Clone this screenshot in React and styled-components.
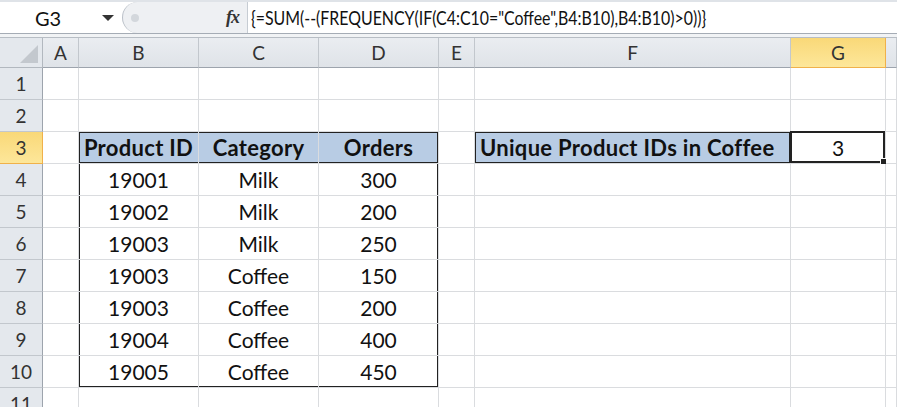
import React from "react";
import styled, { createGlobalStyle } from "styled-components";

const GlobalStyle = createGlobalStyle`
  html, body {
    margin: 0;
    padding: 0;
    background: #ffffff;
    overflow: hidden;
  }
  body {
    font-family: Lato, "Open Sans", "Liberation Sans", sans-serif;
  }
`;

const COLS = [43, 36, 120, 120, 120, 36, 316, 95, 11];
const LETTERS = ["A", "B", "C", "D", "E", "F", "G", ""];

const Page = styled.div`
  width: 897px;
  height: 407px;
  overflow: hidden;
  background: #fff;
`;

const FormulaBar = styled.div`
  display: flex;
  height: 31px;
  border-top: 2px solid #dfe3e8;
  border-bottom: 1px solid #a5acb5;
  background: #fff;
`;

const NameBox = styled.div`
  width: 122px;
  display: flex;
  align-items: center;
  font-size: 20px;
  color: #111;
  span {
    width: 96px;
    text-align: center;
  }
`;

const Arrow = styled.i`
  width: 0;
  height: 0;
  border-left: 6px solid transparent;
  border-right: 6px solid transparent;
  border-top: 6px solid #333;
  margin-left: 6px;
`;

const Splitter = styled.div`
  width: 125px;
  display: flex;
  align-items: center;
  justify-content: space-between;
  background: #eef0f3;
  border-left: 1px solid #b9bfc7;
  border-radius: 16px 0 0 16px;
  padding: 0 8px;
  box-sizing: border-box;
`;

const Grip = styled.span`
  width: 8px;
  height: 8px;
  border-radius: 50%;
  background: #d3d7dc;
`;

const Fx = styled.span`
  font-family: "Liberation Serif", serif;
  font-style: italic;
  font-weight: bold;
  font-size: 18px;
  color: #333;
  letter-spacing: -1px;
`;

const FormulaInput = styled.div`
  flex: 1;
  display: flex;
  align-items: center;
  border-left: 1px solid #c6ccd3;
  padding-left: 3px;
  font-size: 19.5px;
  color: #111;
  white-space: nowrap;
  span {
    display: inline-block;
    transform: scaleX(0.815);
    transform-origin: left center;
  }
`;

const Gap = styled.div`
  height: 3px;
  background: #f1f3f5;
  border-bottom: 1px solid #b7bdc4;
`;

const Sheet = styled.div`
  display: grid;
  grid-template-columns: ${COLS.map((c) => c + "px").join(" ")};
  grid-template-rows: 30px repeat(10, 32px) 32px;
`;

const Corner = styled.div`
  background: #e4e8ed;
  border-right: 1px solid #b2b8bf;
  border-bottom: 1px solid #b2b8bf;
  position: relative;
  &::after {
    content: "";
    position: absolute;
    right: 4px;
    bottom: 4px;
    border-left: 18px solid transparent;
    border-bottom: 18px solid #c3c8ce;
  }
`;

const ColHead = styled.div`
  display: flex;
  align-items: center;
  justify-content: center;
  font-size: 19px;
  color: #333;
  background: ${(p) =>
    p.active
      ? "linear-gradient(#f9d878, #fde79a)"
      : "linear-gradient(#eaedf1, #dfe3e8)"};
  border-right: 1px solid ${(p) => (p.active ? "#f0b14a" : "#c2c7cd")};
  border-bottom: 1px solid ${(p) => (p.active ? "#f0b14a" : "#9da4ad")};
`;

const RowHead = styled.div`
  display: flex;
  align-items: center;
  justify-content: center;
  font-size: 19px;
  color: #333;
  background: ${(p) =>
    p.active ? "linear-gradient(#f9d878, #fde79a)" : "#e4e8ed"};
  border-right: 1px solid ${(p) => (p.active ? "#f0b14a" : "#9da4ad")};
  border-bottom: 1px solid ${(p) => (p.active ? "#f0b14a" : "#c2c7cd")};
`;

const edgeShadow = (edges = "") => {
  const parts = [];
  if (edges.includes("t")) parts.push("inset 0 1px 0 #222");
  if (edges.includes("b")) parts.push("inset 0 -1px 0 #222");
  if (edges.includes("l")) parts.push("inset 1px 0 0 #222");
  if (edges.includes("r")) parts.push("inset -1px 0 0 #222");
  return parts.length ? parts.join(", ") : "none";
};

const Cell = styled.div`
  display: flex;
  align-items: center;
  justify-content: ${(p) => (p.left ? "flex-start" : "center")};
  padding-left: ${(p) => (p.left ? "5px" : "0")};
  font-size: ${(p) => (p.bold ? "22px" : "21px")};
  letter-spacing: ${(p) => (p.bold ? "0.3px" : "0")};
  font-weight: ${(p) => (p.bold ? 700 : 400)};
  color: #111;
  white-space: nowrap;
  background: ${(p) => (p.fill ? "#b8cce4" : "#fff")};
  border-right: 1px solid #dadcdf;
  border-bottom: 1px solid #dadcdf;
  box-shadow: ${(p) => edgeShadow(p.edges)};
  position: relative;
`;

const Selected = styled.div`
  position: absolute;
  left: -1px;
  top: -1px;
  right: 0;
  bottom: 0;
  border: 2px solid #222;
  pointer-events: none;
  &::after {
    content: "";
    position: absolute;
    right: -4px;
    bottom: -4px;
    width: 5px;
    height: 5px;
    background: #222;
    border: 1px solid #fff;
  }
`;

const data = [
  ["19001", "Milk", "300"],
  ["19002", "Milk", "200"],
  ["19003", "Milk", "250"],
  ["19003", "Coffee", "150"],
  ["19003", "Coffee", "200"],
  ["19004", "Coffee", "400"],
  ["19005", "Coffee", "450"],
];

const buildRow = (r) => {
  const cells = [];
  for (let c = 0; c < 8; c++) {
    let props = {};
    let text = "";
    if (r === 3) {
      if (c >= 1 && c <= 3) {
        props = {
          fill: true,
          bold: true,
          edges: "tb" + (c === 1 ? "l" : "") + (c === 3 ? "r" : ""),
        };
        text = ["Product ID", "Category", "Orders"][c - 1];
      }
      if (c === 5) {
        props = { fill: true, bold: true, left: true, edges: "tblr" };
        text = "Unique Product IDs in Coffee";
      }
      if (c === 6) {
        text = "3";
      }
    } else if (r >= 4 && r <= 10) {
      if (c >= 1 && c <= 3) {
        text = data[r - 4][c - 1];
        props = {
          edges: (c === 1 ? "l" : "") + (c === 3 ? "r" : "") + (r === 10 ? "b" : ""),
        };
      }
    }
    cells.push(
      <Cell key={`${r}-${c}`} {...props}>
        {text}
        {r === 3 && c === 6 && <Selected />}
      </Cell>
    );
  }
  return cells;
};

export default function App() {
  return (
    <Page>
      <GlobalStyle />
      <FormulaBar>
        <NameBox>
          <span>G3</span>
          <Arrow />
        </NameBox>
        <Splitter>
          <Grip />
          <Fx>fx</Fx>
        </Splitter>
        <FormulaInput>
          <span>{'{=SUM(--(FREQUENCY(IF(C4:C10="Coffee",B4:B10),B4:B10)>0))}'}</span>
        </FormulaInput>
      </FormulaBar>
      <Gap />
      <Sheet>
        <Corner />
        {LETTERS.map((l, i) => (
          <ColHead key={l + i} active={l === "G"}>
            {l}
          </ColHead>
        ))}
        {Array.from({ length: 11 }, (_, i) => i + 1).map((r) => (
          <React.Fragment key={r}>
            <RowHead active={r === 3}>{r}</RowHead>
            {buildRow(r)}
          </React.Fragment>
        ))}
      </Sheet>
    </Page>
  );
}
